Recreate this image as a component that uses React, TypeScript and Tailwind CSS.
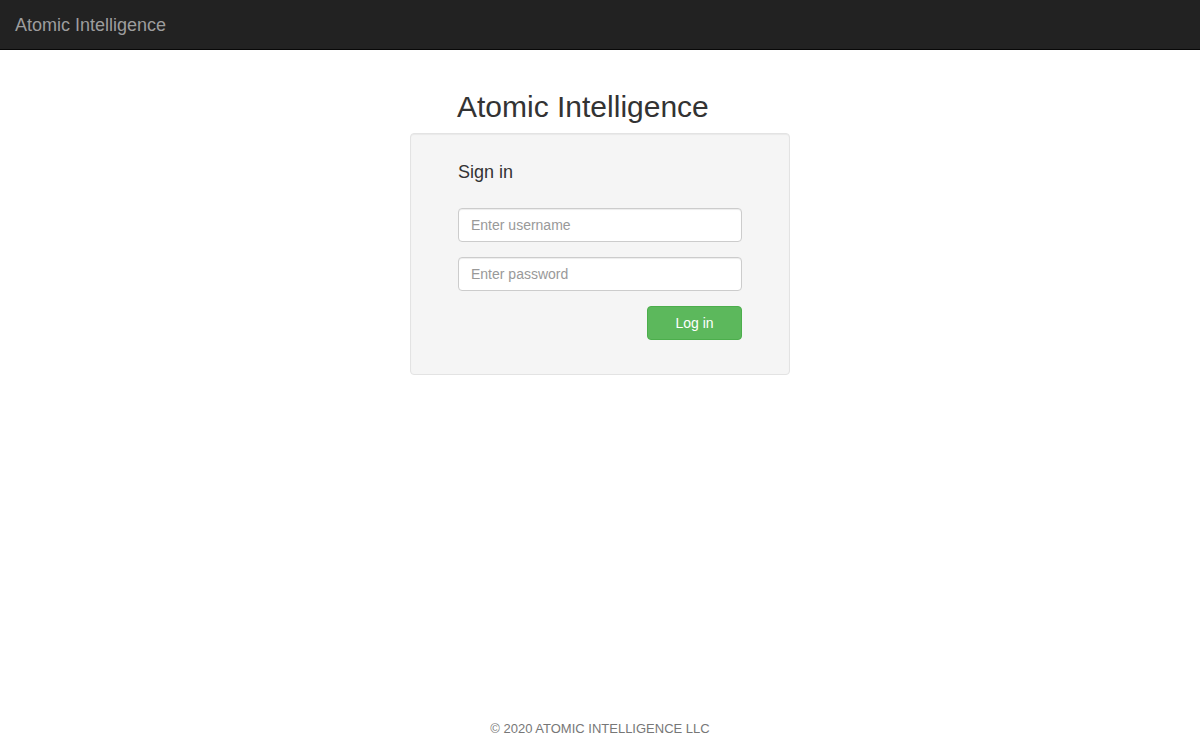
export default function App() {
  return (
    <div className="flex min-h-screen flex-col bg-white font-['Liberation_Sans',Arial,sans-serif] text-[14px] text-[#333]">
      <nav className="flex h-[50px] items-center border-b border-[#080808] bg-[#222] px-[15px]">
        <span className="text-[18px] leading-[20px] text-[#9d9d9d]">Atomic Intelligence</span>
      </nav>

      <main className="flex flex-1 flex-col items-center pt-[40px]">
        <div className="w-[380px]">
          <h1 className="pl-[47px] text-[30px] leading-[33px] font-normal">Atomic Intelligence</h1>

          <div className="mt-[10px] rounded-[4px] border border-[#e3e3e3] bg-[#f5f5f5] px-[47px] pt-[28px] pb-[34px] shadow-[inset_0_1px_1px_rgba(0,0,0,0.05)]">
            <h2 className="text-[18px] leading-[20px] font-normal">Sign in</h2>

            <form className="mt-[26px] flex flex-col gap-[15px]" onSubmit={(e) => e.preventDefault()}>
              <input
                type="text"
                placeholder="Enter username"
                className="h-[34px] w-full rounded-[4px] border border-[#ccc] bg-white px-[12px] text-[14px] text-[#555] placeholder:text-[#999] shadow-[inset_0_1px_1px_rgba(0,0,0,0.075)] outline-none"
              />
              <input
                type="password"
                placeholder="Enter password"
                className="h-[34px] w-full rounded-[4px] border border-[#ccc] bg-white px-[12px] text-[14px] text-[#555] placeholder:text-[#999] shadow-[inset_0_1px_1px_rgba(0,0,0,0.075)] outline-none"
              />
              <div className="flex justify-end">
                <button
                  type="submit"
                  className="h-[34px] w-[95px] rounded-[4px] border border-[#4cae4c] bg-[#5cb85c] text-[14px] text-white"
                >
                  Log in
                </button>
              </div>
            </form>
          </div>
        </div>
      </main>

      <footer className="pb-[2px] text-center text-[13px] leading-[18px] text-[#777]">
        © 2020 ATOMIC INTELLIGENCE LLC
      </footer>
    </div>
  );
}
